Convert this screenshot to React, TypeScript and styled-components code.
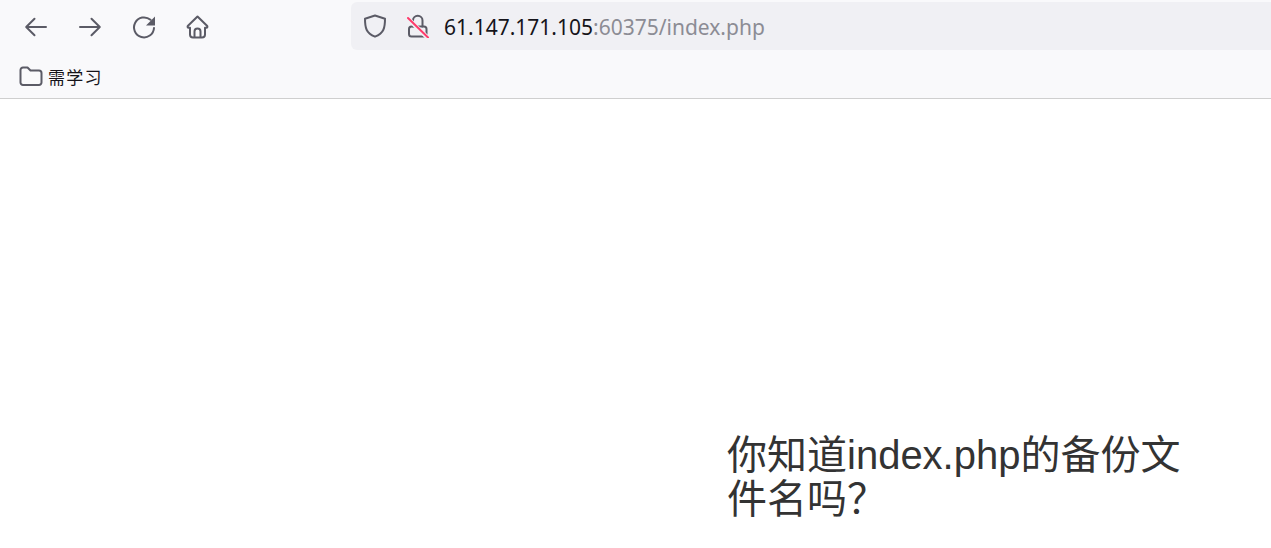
import React from "react";
import styled, { createGlobalStyle } from "styled-components";

const Global = createGlobalStyle`
  html, body { margin: 0; padding: 0; background: #fff; }
  body { width: 1271px; height: 548px; overflow: hidden; }
`;
const Toolbar = styled.header`
  display: flex; align-items: center; height: 54px; background: #f9f9fb;
`;
const Nav = styled.nav`
  display: flex; align-items: center; width: 351px; padding-left: 9px; box-sizing: border-box;
`;
const NavButton = styled.span`
  width: 54px; height: 32px; display: flex; align-items: center; justify-content: center; color: #5b5b66;
`;
const UrlBar = styled.div`
  flex: 1; height: 48px; margin-top: -2px; background: #f0f0f4; border-radius: 6px 0 0 6px;
  display: flex; align-items: center; padding-left: 12px;
`;
const UrlIcon = styled.span<{ $w: number }>`
  display: flex; width: ${p => p.$w}px; color: #5b5b66;
`;
const Url = styled.span`
  font: 400 21px "Noto Sans", sans-serif; color: #8c8c94; position: relative; top: 1px;
`;
const Host = styled.span`color: #15141a;`;
const Bookmarks = styled.div`
  height: 44px; background: #f9f9fb; border-bottom: 1px solid #cfcfcf;
  display: flex; align-items: center; padding-left: 19px; gap: 5px; color: #5b5b66;
`;
const BookmarkLabel = styled.span`
  font: 400 17px "Noto Sans CJK SC", sans-serif; color: #15141a; letter-spacing: 1.3px;
`;
const Page = styled.main`
  padding: 334px 0 0 727px; width: 500px;
`;
const Heading = styled.h1`
  margin: 0; font: 400 40px/44px "Liberation Sans", "Noto Sans CJK SC", sans-serif; color: #333; width: 480px;
`;

const Icon = ({ children }: { children: React.ReactNode }) => (
  <svg width={24} height={24} viewBox="0 0 24 24" fill="none" stroke="currentColor" strokeWidth="2" strokeLinecap="round" strokeLinejoin="round">{children}</svg>
);

export default function App() {
  return (
    <>
      <Global />
      <Toolbar>
        <Nav>
          <NavButton><Icon><path d="M2.500 12h19.500M10.500 3.800 2.200 12l8.300 8.200" /></Icon></NavButton>
          <NavButton><Icon><path d="M2 12h19.500M13.500 3.800 21.800 12l-8.300 8.200" /></Icon></NavButton>
          <NavButton><Icon><path d="M22 13a10 10 0 1 1-3.500-8.200" /><path d="M23 1.500v9h-9z" fill="currentColor" stroke="none" /></Icon></NavButton>
          <NavButton><Icon><path d="M11.500 1.500 2 10.800c-.8.800-.4 2 .7 2H4V19.500a3 3 0 0 0 3 3h9a3 3 0 0 0 3-3V12.800h1.300c1.100 0 1.500-1.200.7-2z" /><path d="M8.500 22v-5.500a3 3 0 0 1 6 0V22" /></Icon></NavButton>
        </Nav>
        <UrlBar>
          <UrlIcon $w={44}><Icon><path d="M12 1.500 2 4.800c0 9 1 14.200 10 17.900 9-3.700 10-8.900 10-17.900z" /></Icon></UrlIcon>
          <UrlIcon $w={37}><Icon><rect x="2" y="12.500" width="17.500" height="10" rx="2.500" /><path d="M6 12.500V6.500a4.750 4.750 0 0 1 9.500 0v6" /><path d="M.5 4 21 24" stroke="#f0f0f4" strokeWidth="4.500" /><path d="M1 4 21 23.500" stroke="#ff3b6b" /></Icon></UrlIcon>
          <Url><Host>61.147.171.105</Host>:60375/index.php</Url>
        </UrlBar>
      </Toolbar>
      <Bookmarks>
        <Icon><path d="M1.500 6a2.500 2.500 0 0 1 2.500-2.500h4.500l3 3H20a2.500 2.500 0 0 1 2.500 2.500v9.500A2.500 2.500 0 0 1 20 21H4a2.500 2.500 0 0 1-2.500-2.500z" /></Icon>
        <BookmarkLabel>需学习</BookmarkLabel>
      </Bookmarks>
      <Page><Heading>你知道index.php的备份文件名吗？</Heading></Page>
    </>
  );
}
